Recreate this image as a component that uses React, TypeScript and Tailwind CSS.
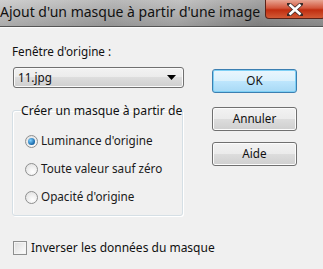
import React from "react";

const font = { fontFamily: '"Noto Sans", "Open Sans", sans-serif' };

function Radio({ checked, label }: { checked?: boolean; label: string }) {
  return (
    <div className="flex items-center h-[14px]">
      <div className="w-[13px] h-[13px] rounded-full border border-[#8e8f8f] bg-[radial-gradient(circle_at_60%_70%,#ffffff,#dcdcdc)] flex items-center justify-center shrink-0">
        {checked && (
          <div className="w-[7px] h-[7px] rounded-full bg-[radial-gradient(circle_at_35%_35%,#7fd0ff,#1566a8_70%,#0b3f75)]" />
        )}
      </div>
      <span className="ml-[3px] text-[11.7px] text-[#1a1a1a] leading-none whitespace-nowrap">{label}</span>
    </div>
  );
}

function Btn({ label, primary, className }: { label: string; primary?: boolean; className?: string }) {
  return (
    <div
      className={
        "w-[85px] h-[24px] rounded-[3px] flex items-center justify-center text-[11.7px] text-[#111] " +
        (primary
          ? "border border-[#3c7fb1] bg-[linear-gradient(#eaf6fd,#d9f0fc_50%,#bee6fd_50%,#a7d9f5)] shadow-[inset_0_0_0_1px_#7ed0f5] "
          : "border border-[#707070] bg-[linear-gradient(#f2f2f2,#ebebeb_50%,#dddddd_50%,#cfcfcf)] shadow-[inset_0_0_0_1px_#fcfcfc] ") +
        (className ?? "")
      }
    >
      {label}
    </div>
  );
}

export default function App() {
  return (
    <div className="w-[323px] h-[269px] bg-[#f0f0f0] overflow-hidden relative" style={font}>
      {/* title bar */}
      <div className="h-[27px] bg-[linear-gradient(100deg,#c4c4c4_0%,#a9a9a9_35%,#b5b5b5_55%,#8f8f8f_80%,#9b9b9b_100%)] relative border-b border-[#555]">
        <div className="absolute inset-0 bg-[linear-gradient(#ffffff30,#00000020)]" />
        <div className="relative pl-0 pt-[3px] text-[14px] text-[#111] leading-[18px] whitespace-nowrap">
          Ajout d'un masque à partir d'une image
        </div>
        <div className="absolute left-[265px] top-0 w-[60px] h-[19px] rounded-b-[4px] border border-t-0 border-[#5a2218] bg-[linear-gradient(#e8a593,#d2553b_45%,#c02d10_55%,#d25a35)] flex items-center justify-center">
          <svg width="16" height="13" viewBox="0 0 16 13">
            <path d="M2 1 L14 12 M14 1 L2 12" stroke="#3a2a28" strokeWidth="4" strokeLinecap="square" />
            <path d="M2.5 1.5 L13.5 11.5 M13.5 1.5 L2.5 11.5" stroke="#ffffff" strokeWidth="2.6" />
          </svg>
        </div>
      </div>
      <div className="h-[1px] bg-[#fbfbfb]" />

      <div className="flex pl-[12px] pt-[16px]">
        <div className="w-[171px] flex flex-col">
          <div className="text-[11.7px] text-[#111] leading-[15px] whitespace-nowrap">Fenêtre d'origine :</div>
          <div className="mt-[8px] ml-[1px] h-[21px] w-[171px] rounded-[3px] border border-[#707070] bg-[linear-gradient(#f2f2f2,#ebebeb_50%,#dddddd_50%,#cfcfcf)] shadow-[inset_0_0_0_1px_#fafafa] flex items-center justify-between pl-[4px] pr-[7px]">
            <span className="text-[11.7px] text-[#111] leading-none">11.jpg</span>
            <svg width="9" height="5" viewBox="0 0 9 5">
              <path d="M0 0 H9 L4.5 5 Z" fill="#000" />
            </svg>
          </div>

          <fieldset className="mt-[15px] min-w-0 w-[171px] h-[113px] border border-[#d5dfe5] rounded-[3px] p-0 shadow-[1px_1px_0_#ffffff,inset_1px_1px_0_#ffffff]">
            <legend className="ml-[8px] px-0 text-[12.2px] text-[#111] leading-[15px] whitespace-nowrap">Créer un masque à partir de</legend>
            <div className="flex flex-col gap-[14px] pl-[12px] pt-[16px]">
              <Radio checked label="Luminance d'origine" />
              <Radio label="Toute valeur sauf zéro" />
              <Radio label="Opacité d'origine" />
            </div>
          </fieldset>

          <div className="mt-[25px] ml-[1px] flex items-center">
            <div className="w-[14px] h-[14px] shrink-0 border border-[#8e8f8f] bg-[linear-gradient(135deg,#dcdcdc,#fefefe)] shadow-[inset_0_0_0_1px_#f4f4f4]" />
            <span className="ml-[4px] text-[12px] text-[#111] leading-none whitespace-nowrap">Inverser les données du masque</span>
          </div>
        </div>

        <div className="ml-[29px] mt-[25px] flex flex-col">
          <Btn label="OK" primary />
          <Btn label="Annuler" className="mt-[14px]" />
          <Btn label="Aide" className="mt-[11px]" />
        </div>
      </div>
    </div>
  );
}
